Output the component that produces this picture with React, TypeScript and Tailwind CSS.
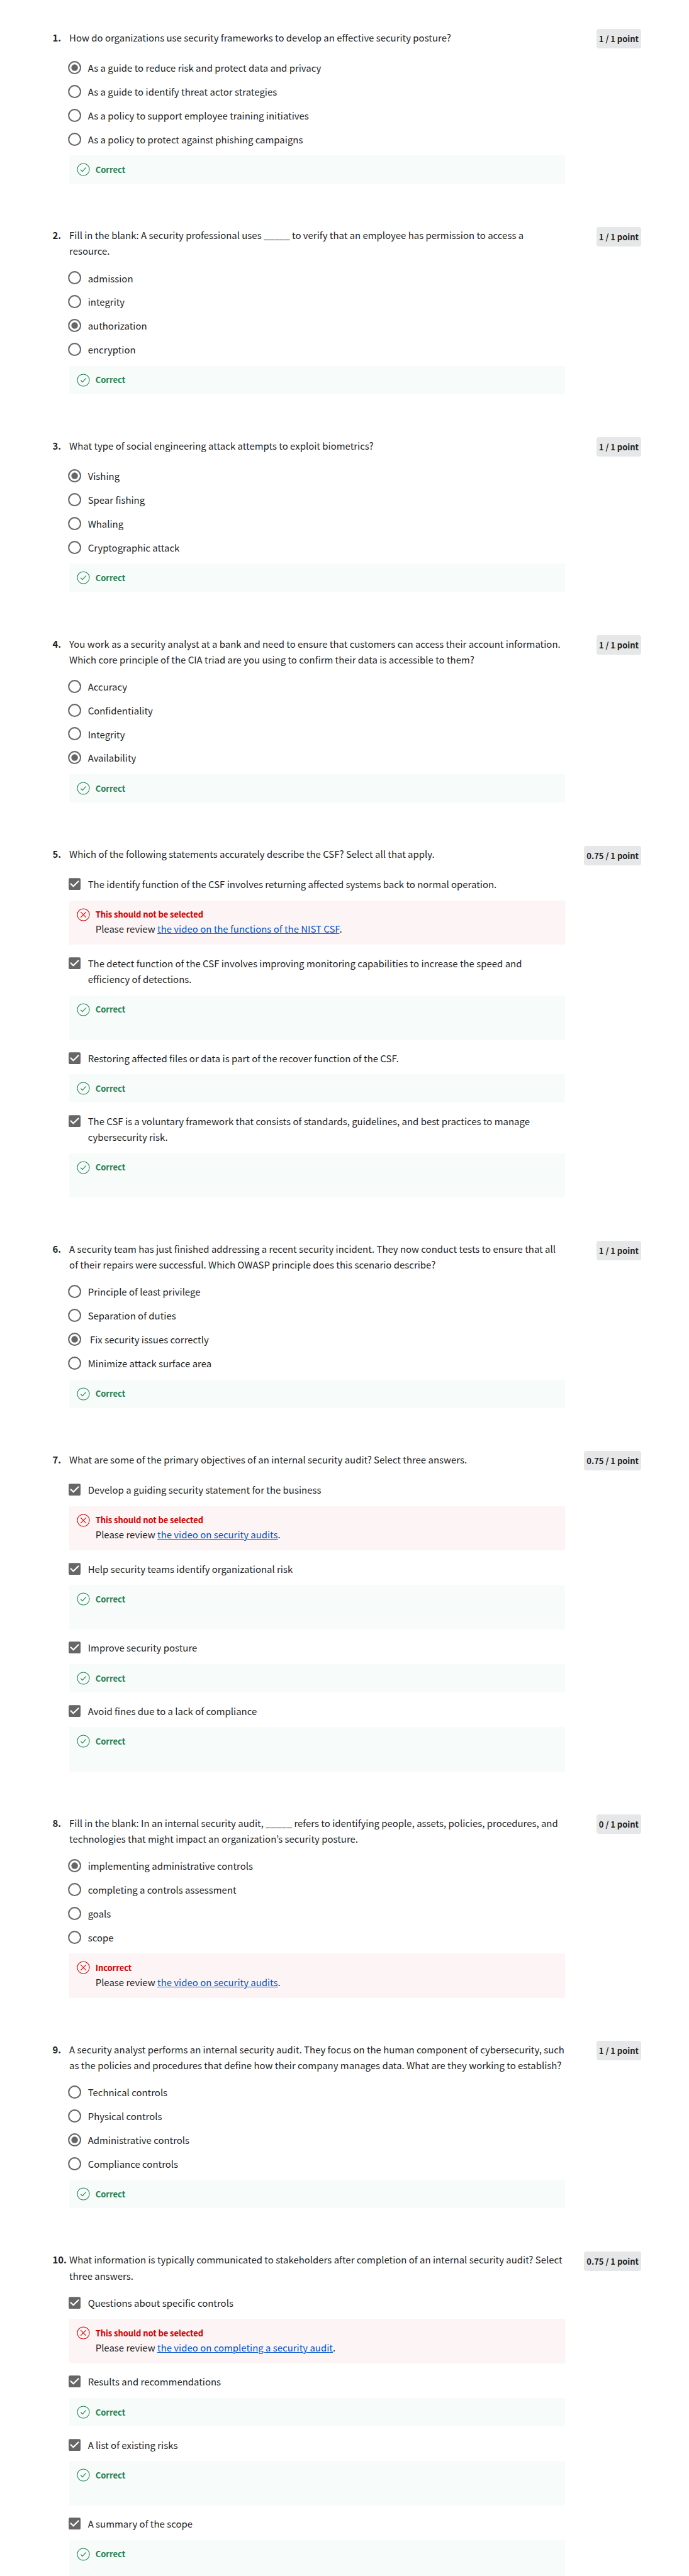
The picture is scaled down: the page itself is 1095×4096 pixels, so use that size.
import type { ReactNode } from "react";

type Feedback = {
  kind: "correct" | "incorrect";
  title: string;
  link?: string;
  tall?: boolean;
};

type Option = { lines: string[]; checked?: boolean; feedback?: Feedback };

type Question = {
  points: string;
  lines: string[];
  type: "radio" | "checkbox";
  options: Option[];
  feedback?: Feedback;
};

const correct: Feedback = { kind: "correct", title: "Correct" };
const correctTall: Feedback = { kind: "correct", title: "Correct", tall: true };
const notSelected = (link: string): Feedback => ({
  kind: "incorrect",
  title: "This should not be selected",
  link,
  tall: true,
});

const radios = (labels: string[], selected: number): Option[] =>
  labels.map((label, i) => ({ lines: [label], checked: i === selected }));

const questions: Question[] = [
  {
    points: "1 / 1 point",
    lines: ["How do organizations use security frameworks to develop an effective security posture?"],
    type: "radio",
    options: radios(
      [
        "As a guide to reduce risk and protect data and privacy",
        "As a guide to identify threat actor strategies",
        "As a policy to support employee training initiatives",
        "As a policy to protect against phishing campaigns",
      ],
      0,
    ),
    feedback: correct,
  },
  {
    points: "1 / 1 point",
    lines: [
      "Fill in the blank: A security professional uses _____ to verify that an employee has permission to access a",
      "resource.",
    ],
    type: "radio",
    options: radios(["admission", "integrity", "authorization", "encryption"], 2),
    feedback: correct,
  },
  {
    points: "1 / 1 point",
    lines: ["What type of social engineering attack attempts to exploit biometrics?"],
    type: "radio",
    options: radios(["Vishing", "Spear fishing", "Whaling", "Cryptographic attack"], 0),
    feedback: correct,
  },
  {
    points: "1 / 1 point",
    lines: [
      "You work as a security analyst at a bank and need to ensure that customers can access their account information.",
      "Which core principle of the CIA triad are you using to confirm their data is accessible to them?",
    ],
    type: "radio",
    options: radios(["Accuracy", "Confidentiality", "Integrity", "Availability"], 3),
    feedback: correct,
  },
  {
    points: "0.75 / 1 point",
    lines: ["Which of the following statements accurately describe the CSF? Select all that apply."],
    type: "checkbox",
    options: [
      {
        lines: ["The identify function of the CSF involves returning affected systems back to normal operation."],
        feedback: notSelected("the video on the functions of the NIST CSF"),
      },
      {
        lines: [
          "The detect function of the CSF involves improving monitoring capabilities to increase the speed and",
          "efficiency of detections.",
        ],
        feedback: correctTall,
      },
      {
        lines: ["Restoring affected files or data is part of the recover function of the CSF."],
        feedback: correct,
      },
      {
        lines: [
          "The CSF is a voluntary framework that consists of standards, guidelines, and best practices to manage",
          "cybersecurity risk.",
        ],
        feedback: correctTall,
      },
    ],
  },
  {
    points: "1 / 1 point",
    lines: [
      "A security team has just finished addressing a recent security incident. They now conduct tests to ensure that all",
      "of their repairs were successful. Which OWASP principle does this scenario describe?",
    ],
    type: "radio",
    options: radios(
      [
        "Principle of least privilege",
        "Separation of duties",
        "\u00a0Fix security issues correctly",
        "Minimize attack surface area",
      ],
      2,
    ),
    feedback: correct,
  },
  {
    points: "0.75 / 1 point",
    lines: ["What are some of the primary objectives of an internal security audit? Select three answers."],
    type: "checkbox",
    options: [
      {
        lines: ["Develop a guiding security statement for the business"],
        feedback: notSelected("the video on security audits"),
      },
      { lines: ["Help security teams identify organizational risk"], feedback: correctTall },
      { lines: ["Improve security posture"], feedback: correct },
      { lines: ["Avoid fines due to a lack of compliance"], feedback: correctTall },
    ],
  },
  {
    points: "0 / 1 point",
    lines: [
      "Fill in the blank: In an internal security audit, _____ refers to identifying people, assets, policies, procedures, and",
      "technologies that might impact an organization’s security posture.",
    ],
    type: "radio",
    options: radios(
      ["implementing administrative controls", "completing a controls assessment", "goals", "scope"],
      0,
    ),
    feedback: { kind: "incorrect", title: "Incorrect", link: "the video on security audits", tall: true },
  },
  {
    points: "1 / 1 point",
    lines: [
      "A security analyst performs an internal security audit. They focus on the human component of cybersecurity, such",
      "as the policies and procedures that define how their company manages data. What are they working to establish?",
    ],
    type: "radio",
    options: radios(
      ["Technical controls", "Physical controls", "Administrative controls", "Compliance controls"],
      2,
    ),
    feedback: correct,
  },
  {
    points: "0.75 / 1 point",
    lines: [
      "What information is typically communicated to stakeholders after completion of an internal security audit? Select",
      "three answers.",
    ],
    type: "checkbox",
    options: [
      {
        lines: ["Questions about specific controls"],
        feedback: notSelected("the video on completing a security audit"),
      },
      { lines: ["Results and recommendations"], feedback: correct },
      { lines: ["A list of existing risks"], feedback: correctTall },
      { lines: ["A summary of the scope"], feedback: correctTall },
    ],
  },
];

function RadioIcon({ checked }: { checked?: boolean }) {
  return (
    <svg viewBox="0 0 24 24" className="size-[25.2px] shrink-0">
      <circle cx="12" cy="12" r="9" fill="none" stroke="#666666" strokeWidth="2" />
      {checked && <circle cx="12" cy="12" r="5" fill="#666666" />}
    </svg>
  );
}

function CheckboxIcon() {
  return (
    <svg viewBox="0 0 24 24" className="size-[25.2px] shrink-0">
      <path
        fill="#666666"
        d="M19 3H5c-1.11 0-2 .9-2 2v14c0 1.1.89 2 2 2h14c1.11 0 2-.9 2-2V5c0-1.1-.89-2-2-2zm-9 14l-5-5 1.41-1.41L10 14.17l7.59-7.59L19 8l-9 9z"
      />
    </svg>
  );
}

function StatusIcon({ kind }: { kind: Feedback["kind"] }) {
  return (
    <svg
      viewBox="0 0 20 20"
      fill="none"
      strokeWidth="1"
      className={
        "mt-[12px] size-[21px] shrink-0 " +
        (kind === "correct" ? "stroke-[#1f8354]" : "stroke-[#d30001]")
      }
    >
      <circle cx="10" cy="10" r="9.1" />
      {kind === "correct" ? (
        <path d="M5.9 10.2l2.7 2.8 5.3-5.9" />
      ) : (
        <path d="M5.9 5.9l8.2 8.2M14.1 5.9l-8.2 8.2" />
      )}
    </svg>
  );
}

function FeedbackBox({ feedback }: { feedback: Feedback }) {
  const good = feedback.kind === "correct";
  return (
    <div
      className={
        "mt-[13.5px] ml-[-0.3px] flex w-[788.4px] pl-[12.1px] " +
        (feedback.tall ? "h-[70.4px] " : "h-[45px] ") +
        (good ? "bg-[#f7fbf9]" : "bg-[#fdf5f5]")
      }
    >
      <StatusIcon kind={feedback.kind} />
      <div className="ml-[8.8px] pt-[10.6px]">
        <div
          className={
            "text-[13px] leading-[23px] font-bold " +
            (good ? "text-[#1f8354]" : "tracking-[-0.07px] text-[#d30001]")
          }
        >
          {feedback.title}
        </div>
        {feedback.link && (
          <div className="leading-[23.6px]">
            Please review{" "}
            <a href="#" className="text-[#0056d2] underline">
              {feedback.link}
            </a>
            .
          </div>
        )}
      </div>
    </div>
  );
}

function Lines({ lines }: { lines: string[] }): ReactNode {
  return lines.map((line) => (
    <div key={line} className="leading-[25.1px] whitespace-nowrap">
      {line}
    </div>
  ));
}

function QuestionBlock({ question, number }: { question: Question; number: number }) {
  const isRadio = question.type === "radio";
  return (
    <section className="mb-[69.2px] flex">
      <div className="w-[26.7px] shrink-0 leading-[25.1px] font-bold">{number}.</div>
      <div className="w-[788.4px] shrink-0">
        <div className="min-h-[30.1px]">
          <Lines lines={question.lines} />
        </div>
        <div className={"mt-[18px] flex flex-col " + (isRadio ? "gap-[12.8px]" : "gap-[16.7px]")}>
          {question.options.map((option) => (
            <div key={option.lines[0]}>
              <div className="flex gap-[8.5px]">
                <div className="-ml-[4.1px] flex h-[25.1px] items-center">
                  {isRadio ? <RadioIcon checked={option.checked} /> : <CheckboxIcon />}
                </div>
                <div>
                  <Lines lines={option.lines} />
                </div>
              </div>
              {option.feedback && <FeedbackBox feedback={option.feedback} />}
            </div>
          ))}
        </div>
        {question.feedback && <FeedbackBox feedback={question.feedback} />}
      </div>
      <div className="mt-[-0.5px] ml-auto h-[31px] rounded-[4px] bg-[#e5e7e8] px-[4px] text-[13px] leading-[31px] font-bold tracking-[-0.03px] whitespace-nowrap">
        {question.points}
      </div>
    </section>
  );
}

export default function App() {
  return (
    <main className="h-[4096px] w-[1095px] overflow-hidden bg-white pt-[46.8px] pr-[76px] pl-[83.4px] font-['Noto_Sans_CJK_KR',sans-serif] text-[14.95px] text-[#1f1f1f]">
      {questions.map((question, i) => (
        <QuestionBlock key={i} question={question} number={i + 1} />
      ))}
    </main>
  );
}
